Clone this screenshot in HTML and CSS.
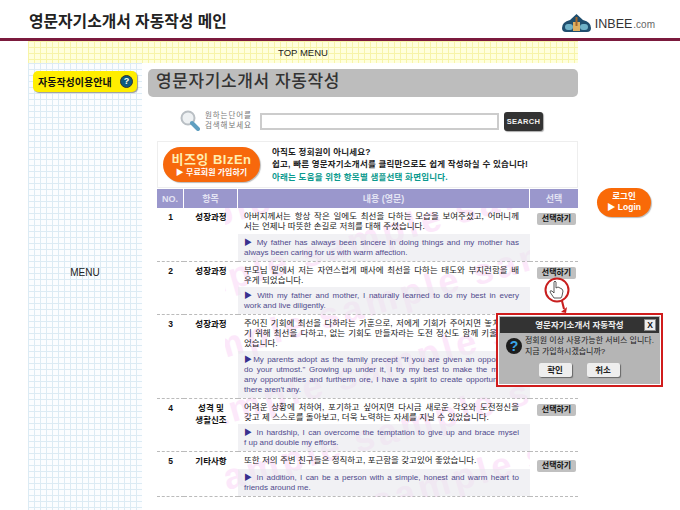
FILE: index.html
```html
<!DOCTYPE html>
<html lang="ko">
  <head>
    <meta charset="UTF-8" />
    <title>영문자기소개서 자동작성 메인</title>
    <link rel="stylesheet" href="styles.css">
  </head>
  <body>
    <header class="top">
      <h1 class="page-title">영문자기소개서 자동작성 메인</h1>
      <div class="logo">
        <svg width="29" height="18" viewBox="0 0 29 18">
          <path d="M14.500 0 L21 6 Q29 8 29 14 Q29 18 25 18 L4 18 Q0 18 0 14 Q0 8 8 6 Z" fill="#1f4e6e" />
          <rect x="3" y="10" width="8" height="6" rx="3" fill="#6fb2c8" />
          <rect x="18" y="10" width="8" height="6" rx="3" fill="#6fb2c8" />
          <rect x="11" y="8" width="7" height="9" fill="#e0b060" />
          <rect x="13.500" y="3" width="2" height="9" fill="#a5662a" />
        </svg>
        <span class="logo-name">INBEE</span><span class="logo-com">.com</span>
      </div>
    </header>

    <div class="layout">
      <div class="content">
        <div class="top-menu">TOP MENU</div>
        <div class="columns">
          <aside class="side">
            <a class="guide">자동작성이용안내 <span class="guide-q">?</span></a>
            <div class="side-menu">MENU</div>
          </aside>

          <main class="main">
            <h2 class="main-title">영문자기소개서 자동작성</h2>

            <div class="search">
              <svg class="search-icon" width="20" height="22" viewBox="0 0 20 22">
                <circle cx="8" cy="8" r="6.500" fill="#eef1f3" stroke="#b9bfc4" stroke-width="2" />
                <path d="M12 13 L18 19" stroke="#5f9fc0" stroke-width="4" stroke-linecap="round" />
              </svg>
              <p class="search-label">원하는단어를<br />검색해보세요</p>
              <input class="search-box" type="text" />
              <button class="search-btn">SEARCH</button>
            </div>

            <div class="promo">
              <div class="promo-pill">
                <strong>비즈잉 BIzEn</strong>
                <span>▶ 무료회원 가입하기</span>
              </div>
              <div class="promo-text">
                <p>아직도 정회원이 아니세요?</p>
                <p>쉽고, 빠른 영문자기소개서를 클릭만으로도 쉽게 작성하실 수 있습니다!</p>
                <p class="promo-note">아래는 도움을 위한 항목별 샘플선택 화면입니다.</p>
              </div>
            </div>

            <div class="sheet">
              <div class="marks-clip" aria-hidden="true">
                <div class="marks">
                  <span>sample</span><span>sample</span><span>sample</span>
                  <span>sample</span><span>sample</span><span>sample</span>
                  <span>sample</span><span>sample</span><span>sample</span>
                  <span>sample</span><span>sample</span><span>sample</span>
                  <span>sample</span><span>sample</span><span>sample</span>
                  <span>sample</span><span>sample</span><span>sample</span>
                </div>
              </div>
              <table class="list">
                <thead>
                  <tr>
                    <th class="c-no">NO.</th>
                    <th class="c-item">항목</th>
                    <th class="c-text">내용 (영문)</th>
                    <th class="c-pick">선택</th>
                  </tr>
                </thead>
                <tbody>
                  <tr>
                    <td class="no">1</td>
                    <td class="item">성장과정</td>
                    <td class="text">
                      <div class="ko">
                        <span class="fill">아버지께서는 항상 작은 일에도 최선을 다하는 모습을 보여주셨고, 어머니께</span>
                        서는 언제나 따뜻한 손길로 저희를 대해 주셨습니다.
                      </div>
                      <div class="en">
                        <span class="fill"><b>▶</b> My father has always been sincere in doing things and my mother has</span>
                        always been caring for us with warm affection.
                      </div>
                    </td>
                    <td class="pick"><button class="pick-btn">선택하기</button></td>
                  </tr>
                  <tr>
                    <td class="no">2</td>
                    <td class="item">성장과정</td>
                    <td class="text">
                      <div class="ko">
                        <span class="fill">부모님 밑에서 저는 자연스럽게 매사에 최선을 다하는 태도와 부지런함을 배</span>
                        우게 되었습니다.
                      </div>
                      <div class="en">
                        <span class="fill"><b>▶</b> With my father and mother, I naturally learned to do my best in every</span>
                        work and live diligently.
                      </div>
                    </td>
                    <td class="pick"><button class="pick-btn">선택하기</button></td>
                  </tr>
                  <tr>
                    <td class="no">3</td>
                    <td class="item">성장과정</td>
                    <td class="text">
                      <div class="ko">
                        <span class="fill">주어진 기회에 최선을 다하라는 가훈으로, 저에게 기회가 주어지면 놓치지 않</span>
                        <span class="fill">기 위해 최선을 다하고, 없는 기회도 만들자라는 도전 정신도 함께 키울 수 있</span>
                        었습니다.
                      </div>
                      <div class="en">
                        <span class="fill"><b>▶</b>My parents adopt as the family precept "If you are given an opportunity,</span>
                        <span class="fill">do your utmost." Growing up under it, I try my best to make the most of</span>
                        <span class="fill">any opportunities and furtherm ore, I have a spirit to create opportunities if</span>
                        there aren't any.
                      </div>
                    </td>
                    <td class="pick"><button class="pick-btn">선택하기</button></td>
                  </tr>
                  <tr>
                    <td class="no">4</td>
                    <td class="item">성격 및<br />생활신조</td>
                    <td class="text">
                      <div class="ko">
                        <span class="fill">어려운 상황에 처하여, 포기하고 싶어지면 다시금 새로운 각오와 도전정신을</span>
                        갖고 제 스스로를 돌아보고, 더욱 노력하는 자세를 지닐 수 있었습니다.
                      </div>
                      <div class="en">
                        <span class="fill"><b>▶</b> In hardship, I can overcome the temptation to give up and brace mysel</span>
                        f up and double my efforts.
                      </div>
                    </td>
                    <td class="pick"><button class="pick-btn">선택하기</button></td>
                  </tr>
                  <tr>
                    <td class="no">5</td>
                    <td class="item">기타사항</td>
                    <td class="text">
                      <div class="ko ko-single">또한 저의 주변 친구들은 정직하고, 포근함을 갖고있어 좋았습니다.</div>
                      <div class="en">
                        <span class="fill"><b>▶</b> In addition, I can be a person with a simple, honest and warm heart to</span>
                        friends around me.
                      </div>
                    </td>
                    <td class="pick pick-low"><button class="pick-btn">선택하기</button></td>
                  </tr>
                </tbody>
              </table>
            </div>
          </main>
        </div>
      </div>

      <div class="aside-right">
        <a class="login">로그인<br />▶ Login</a>
      </div>
    </div>

    <!-- pointer from the button down to the dialog -->
    <svg class="pointer" width="34" height="38" viewBox="0 0 34 38">
      <circle cx="16" cy="14" r="11.500" fill="none" stroke="#c81e1e" stroke-width="2" />
      <path d="M21 25 L23 33" stroke="#c81e1e" stroke-width="2" />
      <path d="M20 36 L26 31 L25 37 Z" fill="#c81e1e" />
      <path d="M13 6 Q14 4 15 6 L15 12 L17 11 L19 12 L21 13 L22 15 L21 20 L20 22 L13 22 L9 16 Q9 14 11 15 L13 17 Z" fill="#fff" stroke="#333" stroke-width="0.800" />
    </svg>

    <div class="dialog">
      <div class="dialog-in">
        <div class="dialog-head">
          <span>영문자기소개서 자동작성</span>
          <span class="dialog-x">X</span>
        </div>
        <div class="dialog-body">
          <span class="dialog-q">?</span>
          <p>정회원 이상 사용가능한 서비스 입니다.<br />지금 가입하시겠습니까?</p>
        </div>
        <div class="dialog-btns">
          <button>확인</button>
          <button>취소</button>
        </div>
      </div>
    </div>
  </body>
</html>
```

FILE: styles.css
```css
* {
  margin: 0;
  padding: 0;
  box-sizing: border-box;
  font-family: "Liberation Sans", "Noto Sans CJK KR", sans-serif;
}
html,
body {
  height: 510px;
  overflow: hidden;
  background: #fff;
}
.top {
  height: 41px;
  display: flex;
  align-items: center;
  justify-content: space-between;
  padding: 0 25px 0 29px;
  border-bottom: 3px solid #7b1a3d;
}
.page-title {
  font-size: 15.800px;
  font-weight: 700;
  color: #222;
  margin-top: 3px;
}
.logo {
  display: flex;
  align-items: flex-end;
  margin-top: 7px;
}
.logo-name {
  font-size: 12.500px;
  color: #333;
  margin-left: 4px;
  line-height: 15px;
}
.logo-com {
  font-size: 10px;
  color: #666;
  margin-left: 1px;
  line-height: 14px;
}
.layout {
  display: flex;
  padding-left: 28px;
}
.content {
  width: 550px;
}
.top-menu {
  height: 22px;
  line-height: 24px;
  text-align: center;
  font-size: 9.500px;
  color: #222;
  background-color: #ffffdc;
  background-image: linear-gradient(#f7f4a8 1px, transparent 1px),
    linear-gradient(90deg, #f7f4a8 1px, transparent 1px);
  background-size: 6px 6px;
}
.columns {
  display: flex;
  height: 447px;
}
.side {
  width: 114px;
  padding: 8px 5px 0;
  background-color: #fbfdff;
  background-image: linear-gradient(#dcebf4 1px, transparent 1px),
    linear-gradient(90deg, #dcebf4 1px, transparent 1px);
  background-size: 6px 6px;
}
.guide {
  display: flex;
  align-items: center;
  justify-content: space-between;
  height: 21px;
  padding: 0 4px 0 5px;
  background: #ffee00;
  border-radius: 5px;
  box-shadow: 1px 1px 1px #999;
  font-size: 10px;
  font-weight: 700;
  color: #111;
}
.guide-q {
  width: 13px;
  height: 13px;
  border-radius: 50%;
  background: #0f5a80;
  border: 1px solid #333;
  color: #ffe;
  font-size: 9px;
  line-height: 11px;
  text-align: center;
}
.side-menu {
  margin-top: 175px;
  text-align: center;
  font-size: 10px;
  color: #222;
}
.main {
  width: 436px;
  padding: 6px 0 0 6px;
}
.main-title {
  height: 28px;
  padding-left: 8px;
  line-height: 25px;
  font-size: 17px;
  font-weight: 500;
  letter-spacing: 0.600px;
  color: #333;
  background: #bdbdbd;
  border-radius: 5px;
}
.search {
  display: flex;
  align-items: center;
  height: 20px;
  margin-top: 14px;
  padding-left: 32px;
}
.search-icon {
  flex: none;
}
.search-label {
  width: 55px;
  margin-left: 5px;
  font-size: 7.500px;
  line-height: 10.500px;
  letter-spacing: 0.900px;
  color: #777;
}
.search-box {
  width: 239px;
  height: 17px;
  border: 2px solid #ccc;
  background: #fff;
}
.search-btn {
  width: 39px;
  height: 19px;
  margin-left: 5px;
  border: 0;
  border-radius: 3px;
  background: #333;
  box-shadow: 1px 1px 1px #aaa;
  color: #f0f0f0;
  font-size: 7.500px;
  font-weight: 700;
  letter-spacing: 0.300px;
}
.promo {
  display: flex;
  align-items: center;
  width: 421px;
  height: 47px;
  margin: 10px 0 0 9px;
  padding-left: 5px;
  border: 1px solid #eee;
}
.promo-pill {
  width: 97px;
  height: 35px;
  display: flex;
  flex-direction: column;
  align-items: center;
  justify-content: center;
  border-radius: 18px;
  background: #f7680c;
  box-shadow: 1px 1px 1px #bbb;
  color: #fff;
}
.promo-pill strong {
  font-size: 13px;
  line-height: 15px;
  letter-spacing: 0.500px;
  color: #ffeeb0;
}
.promo-pill span {
  font-size: 8px;
  line-height: 11px;
  font-weight: 700;
}
.promo-text {
  margin-left: 12px;
  font-size: 8.500px;
  line-height: 12.500px;
  font-weight: 700;
  letter-spacing: 0.200px;
  color: #222;
}
.promo-note {
  color: #0c9a8e;
}
.sheet {
  position: relative;
  width: 421px;
  margin: 1px 0 0 9px;
}
/* the pink sample stamp behind the list */
.marks-clip {
  position: absolute;
  top: 0;
  bottom: 0;
  left: 68px;
  width: 305px;
  overflow: hidden;
}
.marks {
  position: absolute;
  top: -40px;
  left: -60px;
  width: 480px;
  display: grid;
  grid-template-columns: 1fr 1fr 1fr;
  row-gap: 28px;
  transform: rotate(-16deg);
}
.marks span {
  font-size: 36px;
  line-height: 36px;
  font-weight: 700;
  letter-spacing: 4px;
  color: #fce8fa;
}
.list {
  position: relative;
  width: 421px;
  table-layout: fixed;
  border-spacing: 0;
  font-size: 8.500px;
}
.list th {
  height: 19px;
  background: #9a97cc;
  border-right: 1px solid #fff;
  font-size: 9px;
  font-weight: 700;
  color: #e3e3f3;
}
.list th:last-child {
  border-right: 0;
}
.c-no {
  width: 27px;
}
.c-item {
  width: 54px;
}
.c-text {
  width: 292px;
}
.c-pick {
  width: 48px;
}
.list td {
  vertical-align: top;
  border-bottom: 1px dashed #bbb;
}
.no,
.item {
  padding-top: 3px;
  text-align: center;
  font-weight: 700;
  line-height: 12px;
  color: #111;
}
.ko {
  padding: 3px 11px 2.500px 6px;
  line-height: 10px;
  color: #222;
}
.ko-single {
  padding-bottom: 4px;
}
.en {
  padding: 4px 11px 3px 6px;
  font-size: 8px;
  line-height: 10px;
  color: #4f4a8c;
  background: rgba(232, 232, 236, 0.6);
}
.fill {
  display: block;
  text-align: justify;
  text-align-last: justify;
}
.en b {
  color: #38308e;
}
.pick {
  padding: 5px 2px 0 0;
  text-align: right;
}
.pick-low {
  padding-top: 8px;
}
.pick-btn {
  width: 39px;
  height: 12px;
  border: 0;
  border-radius: 2px;
  background: #c0c0c0;
  color: #111;
  font-size: 8px;
  line-height: 12px;
  font-weight: 700;
}
.aside-right {
  padding: 147px 0 0 19px;
}
.login {
  display: block;
  width: 54px;
  height: 29px;
  padding-top: 3px;
  border-radius: 15px;
  background: #f96a08;
  box-shadow: 1px 1px 1px #bbb;
  color: #fff;
  font-size: 8.500px;
  line-height: 11px;
  font-weight: 700;
  text-align: center;
}
.pointer {
  position: absolute;
  left: 541px;
  top: 276px;
}
.dialog {
  position: absolute;
  left: 496px;
  top: 313px;
  width: 167px;
  height: 74px;
  padding: 1px;
  border: 2px solid #d01c1c;
  background: #fff;
}
.dialog-in {
  height: 100%;
  padding-top: 1px;
  background: #b5b5b5;
}
.dialog-head {
  position: relative;
  height: 16px;
  margin: 0 1px;
  text-align: center;
  line-height: 16px;
  font-size: 8.500px;
  font-weight: 700;
  color: #eee;
  background: #333;
}
.dialog-x {
  position: absolute;
  right: 3px;
  top: 2px;
  width: 12px;
  height: 12px;
  line-height: 11px;
  background: #eee;
  border: 1px solid #888;
  color: #111;
}
.dialog-body {
  display: flex;
  align-items: center;
  height: 24px;
  margin-top: 1px;
  padding-left: 7px;
  font-size: 8px;
  line-height: 11px;
  white-space: nowrap;
  color: #222;
}
.dialog-q {
  flex: none;
  width: 16px;
  height: 16px;
  margin-right: 3px;
  border-radius: 50%;
  background: #1d1d1d;
  color: #3aa4e8;
  font-size: 14px;
  line-height: 16px;
  font-weight: 700;
  text-align: center;
}
.dialog-btns {
  display: flex;
  justify-content: center;
  gap: 15px;
  margin-top: 5px;
  padding-right: 1px;
}
.dialog-btns button {
  width: 33px;
  height: 14px;
  border: 0;
  border-radius: 2px;
  background: #eee;
  box-shadow: 1px 1px 1px #666;
  font-size: 8.500px;
  line-height: 14px;
  font-weight: 700;
  color: #222;
}
```
